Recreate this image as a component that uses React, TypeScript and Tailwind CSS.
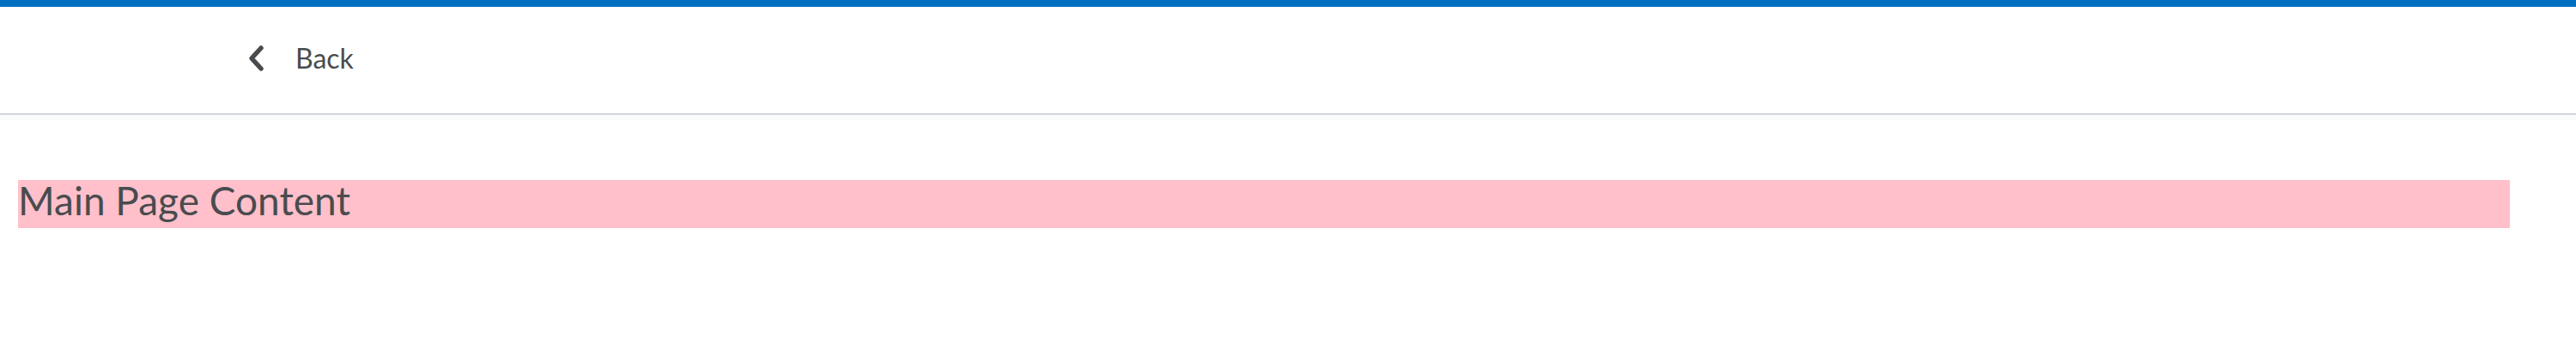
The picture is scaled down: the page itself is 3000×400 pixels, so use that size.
import React from "react";

export default function App() {
  return (
    <div className="w-full bg-white" style={{ fontFamily: "Lato, 'Noto Sans', sans-serif" }}>
      <div className="h-[8px] bg-[#006fbf]" />
      <div className="h-[124px] flex items-center pl-[286px] pb-[4px]">
        <svg width="26" height="34" viewBox="0 0 26 34" className="text-[#494c4e]">
          <path d="M18 5 L7 17 L18 29" fill="none" stroke="currentColor" strokeWidth="5.5" strokeLinecap="round" strokeLinejoin="round" />
        </svg>
        <span className="ml-[32px] text-[32px] leading-none text-[#494c4e]">Back</span>
      </div>
      <div className="h-[2px] bg-[#cdd5dc]" />
      <div className="h-[6px] bg-[#f9fafb]" />
      <div className="pl-[21px] pr-[77px] pt-[70px] pb-[134px]">
        <div className="h-[56px] bg-[pink] flex items-center pb-[8px] text-[46px] leading-none text-[#494c4e]">
          Main Page Content
        </div>
      </div>
    </div>
  );
}
